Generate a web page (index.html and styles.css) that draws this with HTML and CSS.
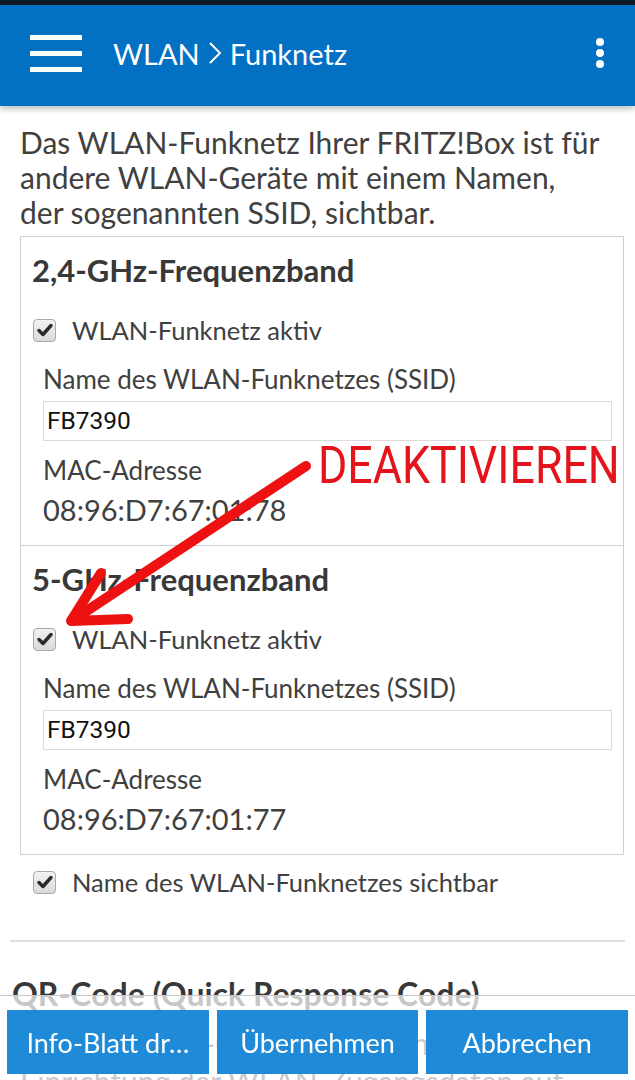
FILE: index.html
```html
<!DOCTYPE html>
<html lang="de">
<head>
  <meta charset="UTF-8">
  <meta name="viewport" content="width=device-width, initial-scale=1">
  <title>WLAN - Funknetz</title>
  <link rel="stylesheet" href="styles.css">
</head>
<body>
  <div class="statusbar"></div>
  <header class="appbar">
    <div class="menu-btn"><span></span><span></span><span></span></div>
    <div class="appbar-title">WLAN
      <svg class="crumb-sep" width="14" height="24" viewBox="0 0 14 24"><path d="M2 2 L12 12 L2 22" fill="none" stroke="#fff" stroke-width="2"/></svg>
      Funknetz</div>
    <div class="more-btn"><span></span><span></span><span></span></div>
  </header>

  <main class="content">
    <p class="intro">Das WLAN-Funknetz Ihrer FRITZ!Box ist für andere WLAN-Geräte mit einem Namen,<br>der sogenannten SSID, sichtbar.</p>

    <div class="bands">
      <section class="band">
        <h2>2,4-GHz-Frequenzband</h2>
        <div class="check"><span class="box"><svg width="16" height="14" viewBox="0 0 16 14"><path d="M2 7.5 L6 11.5 L14 2.5" fill="none" stroke="#2b2b2b" stroke-width="3.4" stroke-linecap="round" stroke-linejoin="round"/></svg></span>WLAN-Funknetz aktiv</div>
        <div class="field">
          <div class="field-label">Name des WLAN-Funknetzes (SSID)</div>
          <div class="ssid">FB7390</div>
          <div class="field-label mac-label">MAC-Adresse</div>
          <div class="mac">08:96:D7:67:01:78</div>
        </div>
      </section>
      <section class="band">
        <h2>5-GHz-Frequenzband</h2>
        <div class="check"><span class="box"><svg width="16" height="14" viewBox="0 0 16 14"><path d="M2 7.5 L6 11.5 L14 2.5" fill="none" stroke="#2b2b2b" stroke-width="3.4" stroke-linecap="round" stroke-linejoin="round"/></svg></span>WLAN-Funknetz aktiv</div>
        <div class="field">
          <div class="field-label">Name des WLAN-Funknetzes (SSID)</div>
          <div class="ssid">FB7390</div>
          <div class="field-label mac-label">MAC-Adresse</div>
          <div class="mac">08:96:D7:67:01:77</div>
        </div>
      </section>
    </div>

    <div class="check visible-check"><span class="box"><svg width="16" height="14" viewBox="0 0 16 14"><path d="M2 7.5 L6 11.5 L14 2.5" fill="none" stroke="#2b2b2b" stroke-width="3.4" stroke-linecap="round" stroke-linejoin="round"/></svg></span>Name des WLAN-Funknetzes sichtbar</div>

    <hr class="divider">

    <h2 class="qr-title">QR-Code (Quick Response Code)</h2>
    <p class="qr-text">Mit einem QR-Code vereinfachen Sie die<br>Einrichtung der WLAN-Zugangsdaten auf Ihren Geräten.</p>
  </main>

  <div class="actionbar">
    <button class="action-btn">Info-Blatt dr…</button>
    <button class="action-btn">Übernehmen</button>
    <button class="action-btn">Abbrechen</button>
  </div>

  <!-- red annotation drawn over the screenshot -->
  <div class="annotation">
    <svg width="635" height="1080" viewBox="0 0 635 1080">
      <path d="M306 466 L76 618" fill="none" stroke="#ee1111" stroke-width="10" stroke-linecap="round"/>
      <path d="M101 573 L71 621 L128 619" fill="none" stroke="#ee1111" stroke-width="10" stroke-linecap="round" stroke-linejoin="round"/>
    </svg>
    <div class="annotation-text">DEAKTIVIEREN</div>
  </div>
</body>
</html>
```

FILE: styles.css
```css
body {
  font-family: "Lato", "Open Sans", sans-serif;
  color: #404040;
  background: #fff;
  margin: 0;
  padding: 0;
  position: relative;
}
.statusbar {
  height: 5px;
  background: #0d1a26;
}
.appbar {
  height: 101px;
  background: #0270c3;
  display: flex;
  align-items: center;
  padding: 0 31px 5px 30px;
  box-sizing: border-box;
  box-shadow: 0 3px 6px rgba(0, 0, 0, 0.25);
  position: relative;
  z-index: 2;
}
.menu-btn {
  width: 52px;
  display: flex;
  flex-direction: column;
  gap: 11px;
  margin-right: 31px;
}
.menu-btn span {
  display: block;
  height: 5px;
  background: #fff;
}
.appbar-title {
  flex: 1;
  color: #fff;
  font-size: 29px;
  display: flex;
  align-items: center;
  gap: 6px;
}
.crumb-sep {
  margin: 0 2px;
}
.more-btn {
  display: flex;
  flex-direction: column;
  gap: 3px;
}
.more-btn span {
  width: 8px;
  height: 8px;
  border-radius: 50%;
  background: #fff;
}
.content {
  padding: 0 11px 120px 20px;
}
.intro {
  font-size: 30px;
  line-height: 35px;
  margin: 19px 0 6px 0;
}
.bands {
  border: 1px solid #cfcfcf;
}
.band {
  padding: 15px 11px 17px 11px;
}
.band + .band {
  border-top: 1px solid #cfcfcf;
}
h2 {
  font-size: 31px;
  line-height: 36px;
  font-weight: bold;
  color: #383838;
  margin: 0;
}
.check {
  display: flex;
  align-items: center;
  font-size: 25.5px;
  line-height: 36px;
  margin-top: 24px;
}
.box {
  width: 21px;
  height: 21px;
  border: 1px solid #a9a9a9;
  border-radius: 4px;
  background: linear-gradient(#f2f2f2, #d9d9d9);
  display: flex;
  align-items: center;
  justify-content: center;
  margin: 0 16px 0 1px;
}
.field {
  padding-left: 11px;
}
.field-label {
  font-size: 26px;
  line-height: 36px;
  margin-top: 13px;
}
.mac-label {
  margin-top: 11px;
}
.ssid {
  margin-top: 4px;
  height: 40px;
  box-sizing: border-box;
  border: 1px solid #dcdcdc;
  font-family: "Roboto", sans-serif;
  font-size: 24.5px;
  line-height: 38px;
  color: #111;
  padding-left: 3px;
}
.mac {
  font-size: 29px;
  line-height: 36px;
  margin-top: 4px;
}
.visible-check {
  margin: 9px 0 0 12px;
}
.divider {
  border: none;
  border-top: 2px solid #dedede;
  margin: 40px -1px 0 -10px;
}
.qr-title {
  margin: 34px 0 0 -8px;
  font-size: 32px;
}
.qr-text {
  font-size: 30px;
  line-height: 38px;
  margin: 12px 0 0 0;
}
.actionbar {
  position: fixed;
  left: 0;
  right: 0;
  bottom: 0;
  height: 85px;
  background: rgba(255, 255, 255, 0.72);
  border-top: 1px solid #c8c8c8;
  display: grid;
  grid-template-columns: 1fr 1fr 1fr;
  gap: 8px;
  padding: 14px 7px 6px 7px;
  box-sizing: border-box;
  z-index: 3;
}
.action-btn {
  background: #1f8ad7;
  color: #fff;
  border: none;
  font-family: "Lato", "Open Sans", sans-serif;
  font-size: 27px;
  padding: 0;
  white-space: nowrap;
}
.annotation {
  position: absolute;
  top: 0;
  left: 0;
  width: 635px;
  height: 1080px;
  pointer-events: none;
  z-index: 4;
}
.annotation svg {
  position: absolute;
  top: 0;
  left: 0;
}
.annotation-text {
  position: absolute;
  left: 318px;
  top: 436px;
  font-family: "Roboto", sans-serif;
  font-size: 52px;
  line-height: 60px;
  color: #e3141b;
  transform: scaleX(0.86);
  transform-origin: left top;
}
```
